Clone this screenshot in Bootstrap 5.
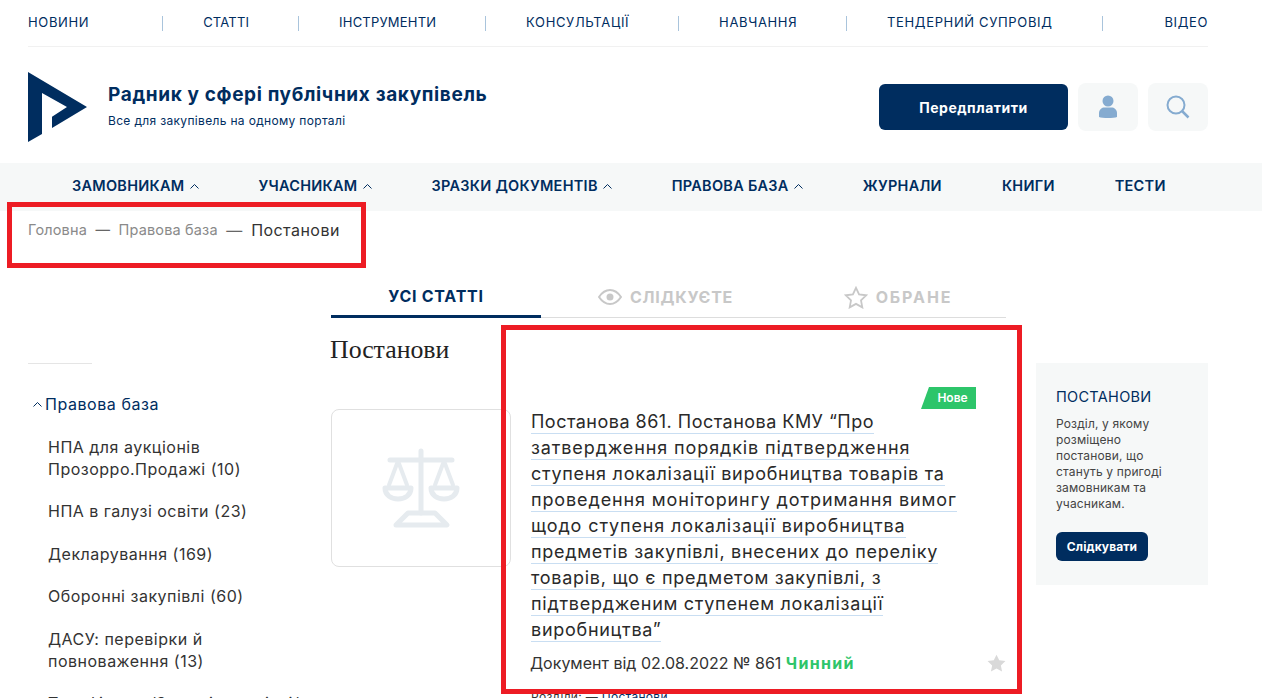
<!DOCTYPE html>
<html lang="uk">
<head>
  <meta charset="utf-8"/>
  <title>Постанови</title>
  <link href="https://cdn.jsdelivr.net/npm/bootstrap@5.3.0/dist/css/bootstrap.min.css" rel="stylesheet"/>
  <style>
    html, body { height: 100%; overflow: hidden; }
    body {
      font-family: Inter, "Noto Sans", sans-serif;
      color: #333;
      background: #fff;
    }
    .page-wrap { height: 698px; overflow: hidden; position: relative; }
    a { color: inherit; text-decoration: none; }

    /* top links */
    .top-links {
      margin: 0 54px 0 28px;
      height: 47px;
      border-bottom: 1px solid #f1f1f1;
      font-size: 13px;
      letter-spacing: .65px;
      color: #002d5f;
      white-space: nowrap;
    }
    .top-tight { letter-spacing: .2px; }
    .top-sep { width: 1px; height: 15px; background: #a9c4dc; margin: 0 40px 0 49px; }
    .top-sep-first { margin-left: 73px; }
    .top-sep-last { margin-right: 62px; }

    /* header */
    .site-head { margin: 0 54px 0 28px; height: 116px; padding-top: 4px; }
    .site-logo { width: 60px; height: 70px; margin-right: 20px; }
    .site-text { margin-top: -3px; }
    .site-name { font-size: 19px; font-weight: 700; color: #002d5f; line-height: 24px; letter-spacing: .64px; }
    .site-sub { font-size: 12px; color: #002d5f; line-height: 16px; margin-top: 6px; letter-spacing: .33px; }
    .btn-navy { background: #002d5f; color: #fff; font-weight: 700; border: 0; }
    .btn-navy:hover { background: #002d5f; color: #fff; }
    .btn-subscribe { width: 189px; height: 46px; font-size: 14px; border-radius: 6px; margin-right: 10px; letter-spacing: .5px; }
    .icon-box {
      width: 60px; height: 48px;
      background: #f6f8f8;
      border-radius: 8px;
    }
    .icon-box + .icon-box { margin-left: 10px; }

    /* main nav */
    .main-menu {
      height: 48px;
      padding: 0 0 2px 72px;
      background: #f6f8f8;
      gap: 60px;
      font-size: 14.5px;
      font-weight: 600;
      color: #002d5f;
      letter-spacing: .27px;
    }
    .menu-caret { width: 9px; height: 5px; margin-left: 5px; vertical-align: 2px; }

    /* breadcrumb */
    .crumbs {
      --bs-breadcrumb-divider: "—";
      --bs-breadcrumb-margin-bottom: 0;
      --bs-breadcrumb-item-padding-x: 8.5px;
      --bs-breadcrumb-divider-color: #666;
      margin-left: 28px;
      height: 69px;
      padding-top: 8px;
      font-size: 14.5px;
      line-height: 22px;
      letter-spacing: .15px;
      color: #8a8a8a;
    }
    .crumbs .active { color: #333; font-size: 16px; letter-spacing: .45px; }

    /* columns */
    .left-col { width: 331px; padding: 83px 0 0 28px; flex: none; }
    .mid-col { width: 675px; flex: none; }
    .right-col {
      width: 172px; height: 222px; flex: none;
      margin: 83px 0 0 30px;
      padding: 25px 20px 0;
      background: #f6f8f8;
    }

    /* sidebar */
    .side-line { width: 64px; border-top: 1px solid #e5e5e5; margin-bottom: 29px; }
    .side-root { font-size: 16px; color: #002d5f; line-height: 22px; margin-bottom: 21px; padding-left: 5px; letter-spacing: .55px; }
    .side-root svg { width: 9px; height: 5px; margin-right: 3px; vertical-align: 3px; }
    .side-list { margin: 0 0 0 20px; font-size: 16px; line-height: 22px; letter-spacing: .5px; color: #333; width: 255px; }
    .side-list li { margin-bottom: 20.4px; }

    /* tabs */
    .doc-tabs { height: 38px; border-bottom: 1px solid #ddd; font-size: 16px; font-weight: 700; color: #c8c8c8; letter-spacing: .75px; }
    .doc-tab { height: 38px; padding-bottom: 4px; }
    .doc-tab svg { margin-right: 8px; }
    .tab-all { width: 210px; color: #002d5f; border-bottom: 3px solid #002d5f; }
    .tab-watch { width: 249px; }
    .tab-fav { width: 216px; letter-spacing: 1.9px; }

    .page-title {
      font-family: "Liberation Serif", serif;
      font-size: 25.8px;
      font-weight: 400;
      line-height: 30px;
      color: #222;
      margin: 17px 0 44px -1px;
    }

    /* article */
    .doc-thumb {
      width: 180px; height: 158px; flex: none;
      border: 1px solid #e0e0e0;
      border-radius: 8px;
    }
    .doc-body { width: 475px; margin-left: 20px; position: relative; }
    .doc-title { font-size: 18px; line-height: 26px; color: #2a2a2a; font-weight: 400; margin: 0; letter-spacing: .72px; }
    .doc-title span { border-bottom: 1px solid #c9def2; padding-bottom: 1px; }
    .doc-title .line-tight { letter-spacing: .48px; }
    .doc-title .line-wide { letter-spacing: .88px; }
    .doc-meta { font-size: 16px; line-height: 22px; margin-top: 9px; margin-left: -1px; color: #333; }
    .doc-status { color: #2dc56a; font-weight: 700; letter-spacing: 1.3px; }
    .doc-new {
      position: absolute; top: -22px; right: 30px;
      width: 55px; height: 22px;
      background: #2dc56a; color: #fff;
      font-size: 12px; font-weight: 600; line-height: 22px;
      text-align: center; padding-left: 8px;
      clip-path: polygon(8px 0, 100% 0, 100% 100%, 0 100%);
    }
    .doc-star { position: absolute; right: 0; bottom: 2px; width: 19px; height: 18px; }
    .doc-tags { font-size: 12px; line-height: 16px; margin-top: 15px; letter-spacing: .3px; color: #333; }
    .doc-tags a { color: #002d5f; }

    /* aside */
    .aside-title { font-size: 14.5px; line-height: 18px; color: #002d5f; font-weight: 400; margin-bottom: 10px; letter-spacing: .3px; }
    .aside-text { font-size: 12px; line-height: 16px; color: #444; margin-bottom: 20px; letter-spacing: .15px; }
    .btn-follow { width: 92px; height: 29px; font-size: 12px; border-radius: 6px; padding: 0; letter-spacing: .1px; }

    /* annotation frames on top of the screenshot */
    .mark-frame { position: absolute; border: 5px solid #ed1c24; pointer-events: none; }
    .mark-crumbs { left: 7px; top: 202px; width: 359px; height: 66px; }
    .mark-doc { left: 501px; top: 325px; width: 521px; height: 369px; }
  </style>
</head>
<body>
<div class="page-wrap">

  <nav class="top-links d-flex align-items-center">
    <a href="#">НОВИНИ</a><span class="top-sep top-sep-first"></span>
    <a href="#" class="top-tight">СТАТТІ</a><span class="top-sep"></span>
    <a href="#" class="top-tight">ІНСТРУМЕНТИ</a><span class="top-sep"></span>
    <a href="#">КОНСУЛЬТАЦІЇ</a><span class="top-sep"></span>
    <a href="#">НАВЧАННЯ</a><span class="top-sep"></span>
    <a href="#">ТЕНДЕРНИЙ СУПРОВІД</a><span class="top-sep top-sep-last"></span>
    <a href="#">ВІДЕО</a>
  </nav>

  <header class="site-head d-flex align-items-center">
    <svg class="site-logo" viewBox="0 0 60 70"><polygon fill="#002d5f" points="0,0 59,35 24,56 24,44.7 39,35 14,21 14,62 0,70"/></svg>
    <div class="site-text flex-grow-1">
      <div class="site-name">Радник у сфері публічних закупівель</div>
      <div class="site-sub">Все для закупівель на одному порталі</div>
    </div>
    <a href="#" class="btn btn-navy btn-subscribe d-flex align-items-center justify-content-center">Передплатити</a>
    <a href="#" class="icon-box d-flex align-items-center justify-content-center">
      <svg width="20" height="24" viewBox="0 0 20 24"><circle cx="10" cy="6" r="5.5" fill="#85abd0"/><path fill="#85abd0" d="M1 22v-4c0-3.500 3-5.500 5.500-5.500h7c2.500 0 5.500 2 5.500 5.500v4c-3 1.300-15 1.300-18 0z"/></svg>
    </a>
    <a href="#" class="icon-box d-flex align-items-center justify-content-center">
      <svg width="24" height="24" viewBox="0 0 24 24" fill="none" stroke="#85abd0" stroke-width="2"><circle cx="10" cy="10" r="8.500"/><path d="M16 16l6.500 6.500" stroke-width="2.500"/></svg>
    </a>
  </header>

  <nav class="main-menu d-flex align-items-center">
    <a href="#">ЗАМОВНИКАМ<svg class="menu-caret" viewBox="0 0 9 5" fill="none" stroke="#002d5f"><path d="M.5 4.500l4-4 4 4"/></svg></a>
    <a href="#">УЧАСНИКАМ<svg class="menu-caret" viewBox="0 0 9 5" fill="none" stroke="#002d5f"><path d="M.5 4.500l4-4 4 4"/></svg></a>
    <a href="#">ЗРАЗКИ ДОКУМЕНТІВ<svg class="menu-caret" viewBox="0 0 9 5" fill="none" stroke="#002d5f"><path d="M.5 4.500l4-4 4 4"/></svg></a>
    <a href="#">ПРАВОВА БАЗА<svg class="menu-caret" viewBox="0 0 9 5" fill="none" stroke="#002d5f"><path d="M.5 4.500l4-4 4 4"/></svg></a>
    <a href="#">ЖУРНАЛИ</a>
    <a href="#">КНИГИ</a>
    <a href="#">ТЕСТИ</a>
  </nav>

  <ol class="breadcrumb crumbs">
    <li class="breadcrumb-item"><a href="#">Головна</a></li>
    <li class="breadcrumb-item"><a href="#">Правова база</a></li>
    <li class="breadcrumb-item active">Постанови</li>
  </ol>

  <div class="d-flex">
    <aside class="left-col">
      <div class="side-line"></div>
      <div class="side-root"><svg viewBox="0 0 9 5" fill="none" stroke="#002d5f"><path d="M.5 4.500l4-4 4 4"/></svg>Правова база</div>
      <ul class="side-list list-unstyled">
        <li>НПА для аукціонів Прозорро.Продажі (10)</li>
        <li>НПА в галузі освіти (23)</li>
        <li>Декларування (169)</li>
        <li>Оборонні закупівлі (60)</li>
        <li>ДАСУ: перевірки й повноваження (13)</li>
        <li>Тарифікатор/Зимові закупівлі/</li>
      </ul>
    </aside>

    <main class="mid-col">
      <div class="doc-tabs d-flex">
        <a href="#" class="doc-tab tab-all d-flex align-items-center justify-content-center">УСІ СТАТТІ</a>
        <a href="#" class="doc-tab tab-watch d-flex align-items-center justify-content-center">
          <svg width="24" height="16" viewBox="0 0 24 16" fill="none" stroke="#c8c8c8" stroke-width="2"><path d="M1 8c3-4.500 6.500-7 11-7s8 2.500 11 7c-3 4.500-6.500 7-11 7S4 12.500 1 8z"/><circle cx="12" cy="8" r="3.500" fill="#c8c8c8" stroke="none"/></svg>
          СЛІДКУЄТЕ
        </a>
        <a href="#" class="doc-tab tab-fav d-flex align-items-center justify-content-center">
          <svg width="24" height="23" viewBox="0 0 24 23" fill="none" stroke="#c8c8c8" stroke-width="1.800"><path d="M12 1.800l3.100 6.600 7.100.9-5.200 5 1.300 7.100-6.300-3.500-6.300 3.500 1.300-7.100-5.200-5 7.100-.9z"/></svg>
          ОБРАНЕ
        </a>
      </div>

      <h1 class="page-title">Постанови</h1>

      <article class="d-flex">
        <div class="doc-thumb d-flex align-items-center justify-content-center">
          <svg width="80" height="80" viewBox="0 0 80 80" fill="none" stroke="#e6ebef" stroke-width="5" stroke-linecap="round" stroke-linejoin="round">
            <path d="M40 3v62M9 12h62"/>
            <path d="M17 13L8 37M17 13l9 24M63 13l-9 24M63 13l9 24" stroke-width="4"/>
            <path d="M4 40h26c0 7-6 11-13 11S4 47 4 40zM50 40h26c0 7-6 11-13 11s-13-4-13-11z" stroke-width="5"/>
            <path d="M27 65h27l12 12H15z"/>
          </svg>
        </div>
        <div class="doc-body">
          <span class="doc-new">Нове</span>
          <h2 class="doc-title">
            <span class="line-tight">Постанова 861. Постанова КМУ “Про</span><br>
            <span class="line-wide">затвердження порядків підтвердження</span><br>
            <span>ступеня локалізації виробництва товарів та</span><br>
            <span class="line-wide">проведення моніторингу дотримання вимог</span><br>
            <span class="line-wide">щодо ступеня локалізації виробництва</span><br>
            <span>предметів закупівлі, внесених до переліку</span><br>
            <span>товарів, що є предметом закупівлі, з</span><br>
            <span>підтвердженим ступенем локалізації</span><br>
            <span>виробництва”</span>
          </h2>
          <div class="doc-meta position-relative">
            Документ від 02.08.2022 № 861 <span class="doc-status">Чинний</span>
            <svg class="doc-star" viewBox="0 0 24 23"><path fill="#d9d9d9" d="M12 .8l3.500 7.300 7.900 1-5.800 5.500 1.500 7.900-7.100-3.900-7.100 3.900 1.500-7.900L.6 9.100l7.900-1z"/></svg>
          </div>
          <div class="doc-tags">Розділи: — <a href="#">Постанови</a></div>
        </div>
      </article>
    </main>

    <aside class="right-col">
      <h3 class="aside-title">ПОСТАНОВИ</h3>
      <p class="aside-text">Розділ, у якому розміщено постанови, що стануть у пригоді замовникам та учасникам.</p>
      <a href="#" class="btn btn-navy btn-follow d-flex align-items-center justify-content-center">Слідкувати</a>
    </aside>
  </div>

  <div class="mark-frame mark-crumbs"></div>
  <div class="mark-frame mark-doc"></div>
</div>
<script src="https://cdn.jsdelivr.net/npm/bootstrap@5.3.0/dist/js/bootstrap.bundle.min.js"></script>
</body>
</html>
